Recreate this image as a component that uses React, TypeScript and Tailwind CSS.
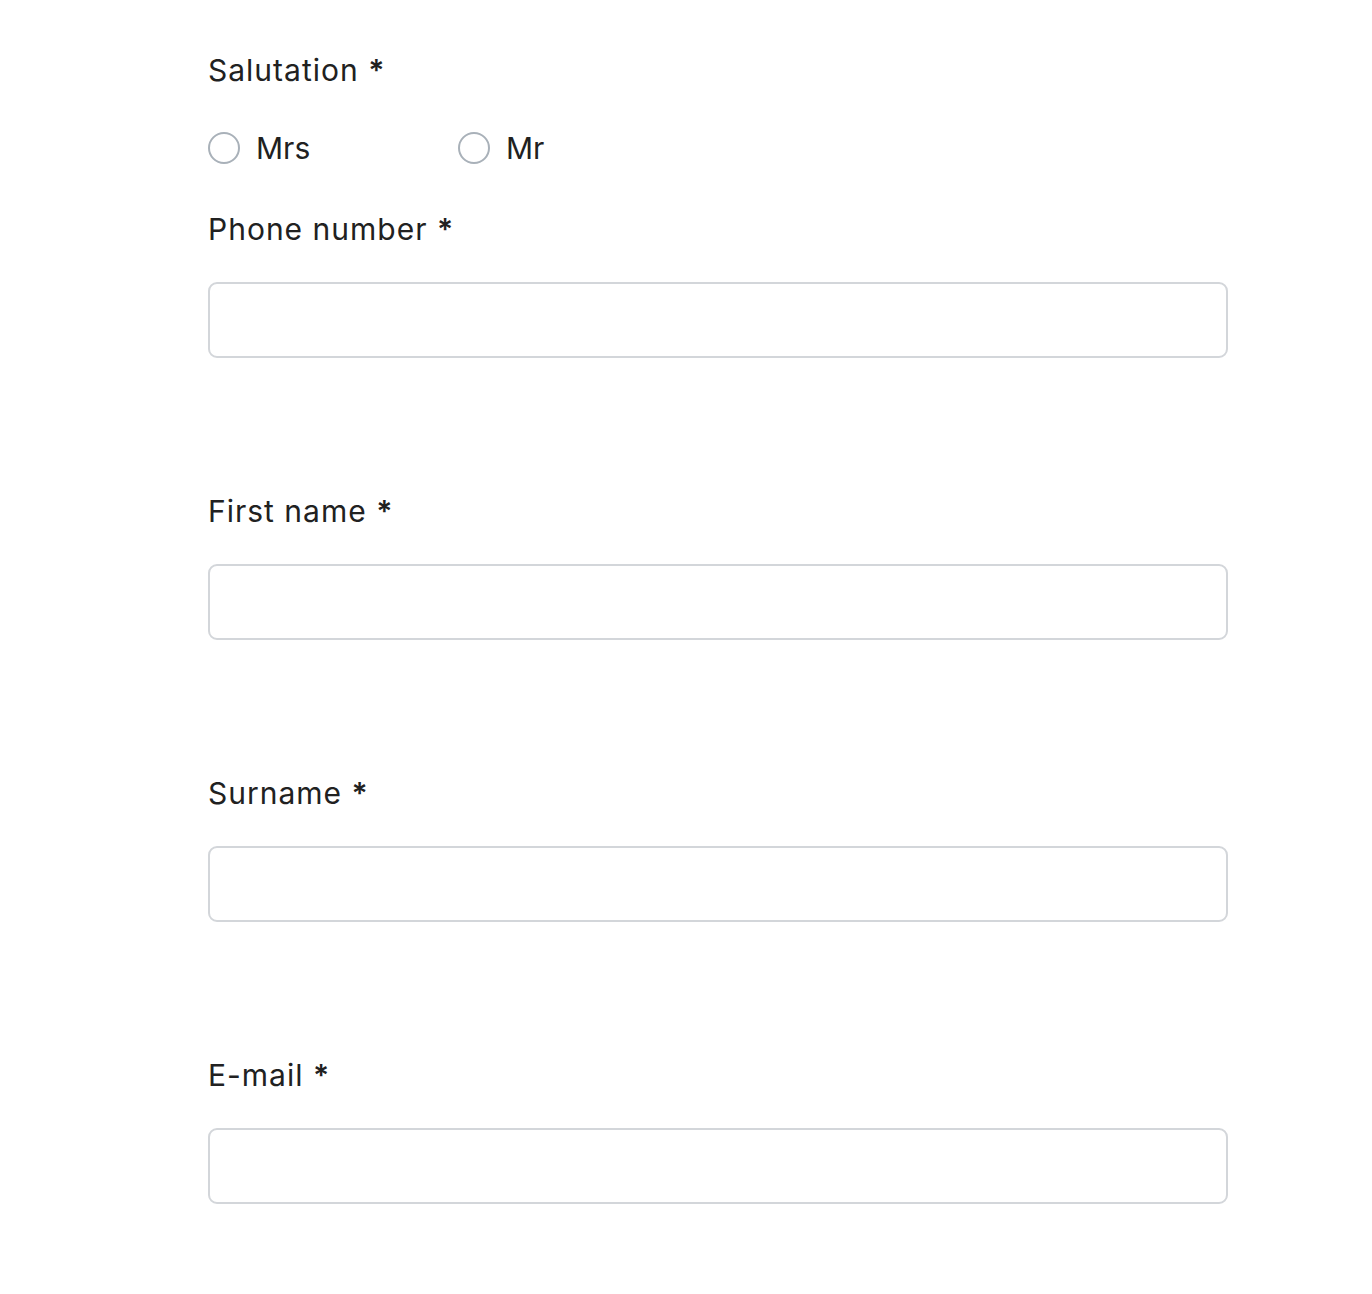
import React from "react";

function Label({ text }: { text: string }) {
  return (
    <div className="h-[44px] leading-[44px] text-[30px] tracking-[1px] text-[#212121]">
      {text} <span className="font-semibold">*</span>
    </div>
  );
}

function Field({ label, first }: { label: string; first?: boolean }) {
  return (
    <div className={first ? "mt-[37px]" : "mt-[131px]"}>
      <Label text={label} />
      <div className="mt-[31px] h-[76px] w-[1020px] rounded-[9px] border-2 border-[#d3d6da] bg-white" />
    </div>
  );
}

function Radio({ label }: { label: string }) {
  return (
    <label className="flex w-[250px] items-center">
      <span className="h-[32px] w-[32px] rounded-full border-2 border-[#a9b1b9] bg-white" />
      <span className="ml-[16px] text-[30px] leading-[44px] text-[#212121]">{label}</span>
    </label>
  );
}

export default function App() {
  return (
    <div
      className="min-h-[1294px] w-full bg-white pl-[208px] pt-[48px]"
      style={{ fontFamily: "Inter, 'Noto Sans', sans-serif" }}
    >
      <Label text="Salutation" />
      <div className="mt-[34px] flex h-[44px] items-center">
        <Radio label="Mrs" />
        <Radio label="Mr" />
      </div>
      <Field label="Phone number" first />
      <Field label="First name" />
      <Field label="Surname" />
      <Field label="E-mail" />
    </div>
  );
}
